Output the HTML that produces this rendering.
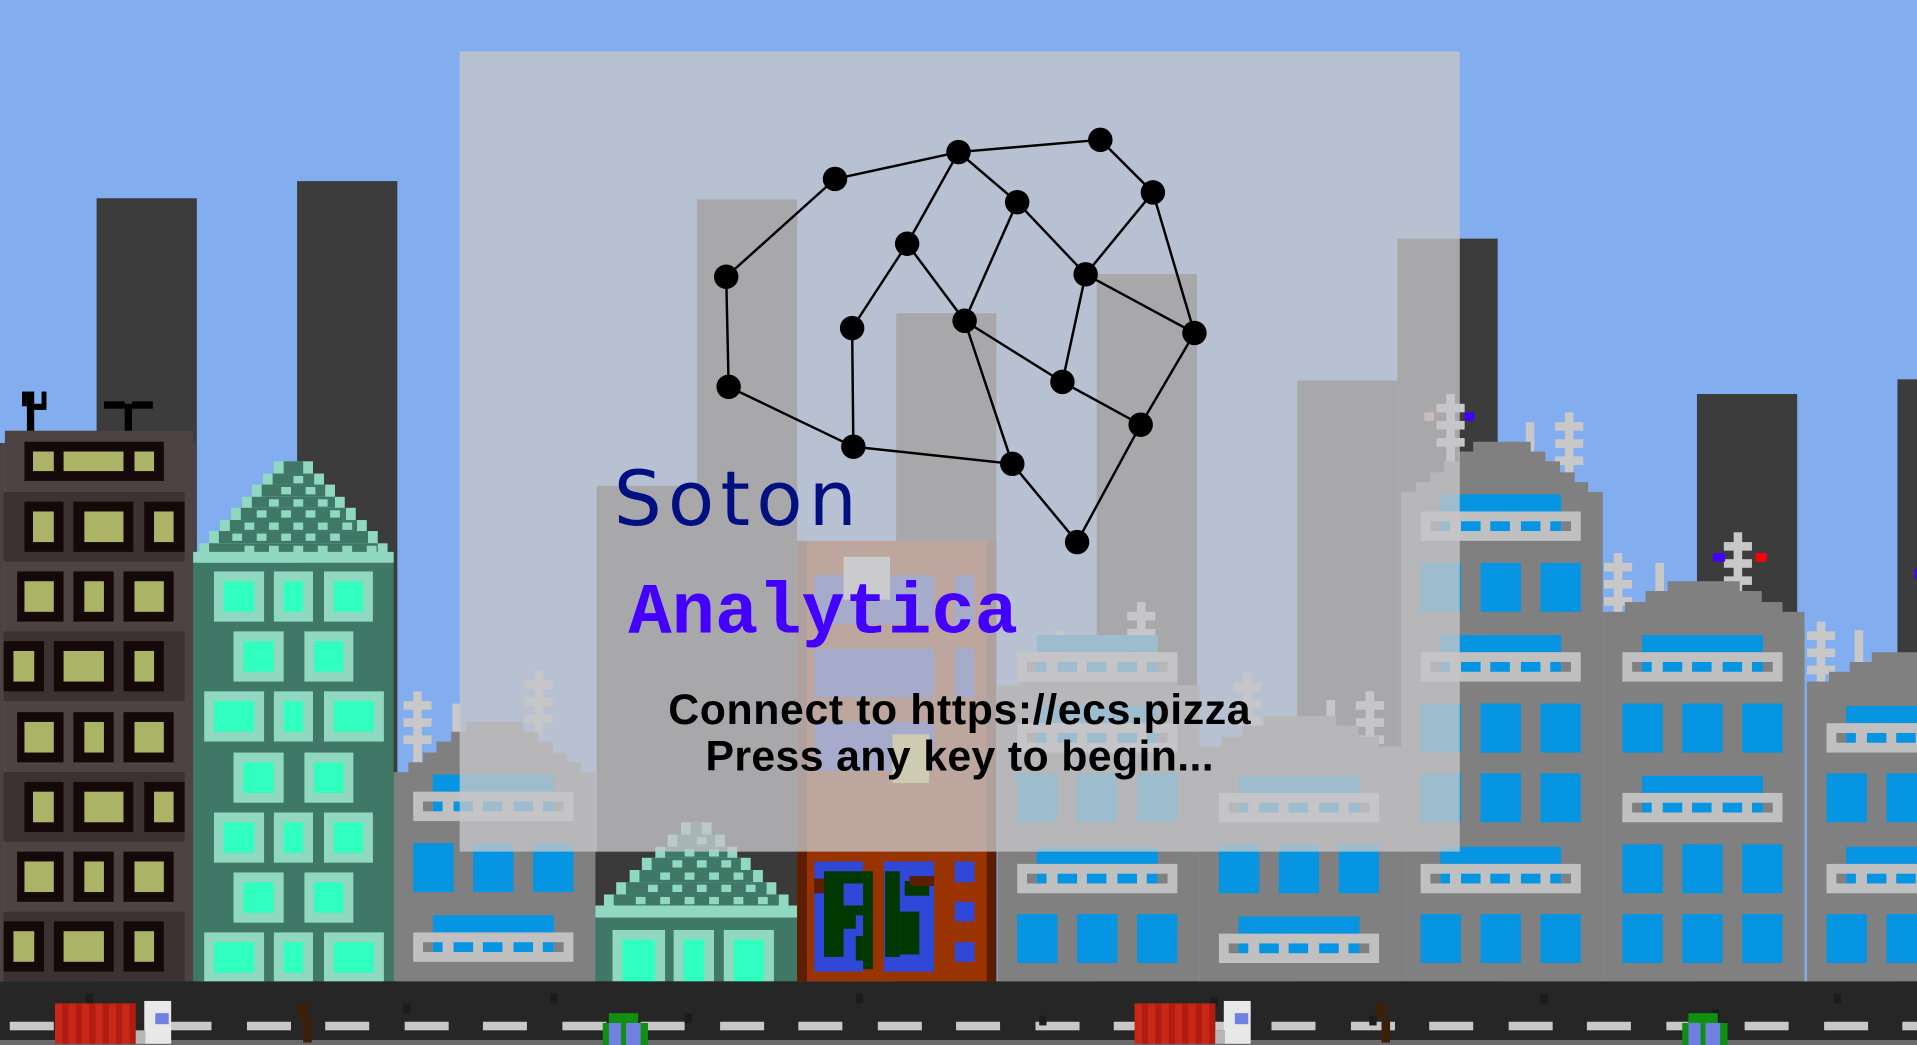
<!DOCTYPE html>
<html><head><meta charset="utf-8"><style>
html,body{margin:0;padding:0;width:1917px;height:1045px;overflow:hidden;background:#82aef0}
#s{position:absolute;left:0;top:0;width:1568px;height:854px;transform-origin:0 0;transform:scale(1.22258,1.22365);background:#82aef0;overflow:hidden}
#s div{position:absolute}
</style></head><body>
<div id="s"></div>
<script>
const S=document.getElementById('s');
function r(x,y,w,h,c){const d=document.createElement('div');d.style.cssText='left:'+x+'px;top:'+y+'px;width:'+w+'px;height:'+h+'px;background:'+c;S.appendChild(d);return d;}
[[79,162],[243,148],[570,163],[733,256],[897,224],[1143,195],[1388,322],[1552,310],[488,397],[1061,311]].forEach(([x,y])=>r(x,y,82,802-y,'#3c3c3c'));
function ant(x,top,h){const c='#c8c8c8';r(x,top,7,h,c);for(let i=0;i<3;i++)r(x-8,top+8+i*14,23,7,c);}
function pole(x,top,h){r(x,top,7,h,'#c8c8c8');}
function roof(x0,w,base,peak,c){const n=Math.max(1,Math.round((base-peak)/9));for(let i=0;i<n;i++){const inset=(w/2-12)*(i+1)/(n+1);r(x0+inset,base-(i+1)*((base-peak)/n),w-2*inset,(base-peak)/n+1,c);}}
function gb(x0,top,peak,floors){
 roof(x0,165,top,peak,'#808080');
 r(x0,top,165,802-top,'#808080');
 floors.forEach(([y,t])=>{
  if(t=='w'){for(let i=0;i<3;i++)r(x0+16+49*i,y-16,33,40,'#0595e2');}
  else{r(x0+32,y-14,99,14,'#0595e2');r(x0+16,y,131,24,'#c0c0c0');r(x0+24,y+8,8,8,'#808080');r(x0+32,y+8,8,8,'#0595e2');[49,73,98].forEach(o=>r(x0+o,y+8,16,8,'#0595e2'));r(x0+122,y+8,9,8,'#0595e2');r(x0+131,y+8,8,8,'#808080');}
 });
}
ant(1183,322,62);pole(1248,345,36);ant(1280,337,55);ant(1320,452,55);pole(1354,460,32);ant(1418,435,62);ant(1486,508,58);pole(1517,515,32);ant(338,565,58);pole(370,575,30);ant(437,548,52);ant(930,492,60);pole(863,515,30);ant(773,443,60);pole(805,450,30);ant(1017,550,55);ant(1117,565,55);pole(1085,572,30);
r(1401,452,10,7,'#4400ff');r(1436,452,9,7,'#ff0000');r(1198,337,8,7,'#4400ff');r(1165,337,8,7,'#d89090');r(1566,465,2,8,'#4400ff');
gb(322,631,590,[[647,'b'],[704.5,'w'],[762,'b']]);
gb(816,560,530,[[533,'b'],[590.5,'b'],[648,'w'],[705.5,'b'],[763,'w']]);
gb(981,610,585,[[648,'b'],[705.5,'w'],[763,'b']]);
gb(1146,402,361,[[418,'b'],[475.5,'w'],[533,'b'],[590.5,'w'],[648,'w'],[705.5,'b'],[763,'w']]);
gb(1311,500,475,[[533,'b'],[590.5,'w'],[648,'b'],[705.5,'w'],[763,'w']]);
gb(1478,557,533,[[590.5,'b'],[648,'w'],[705.5,'b'],[763,'w']]);
r(4,352,154,450,'#4f4242');r(0,362,4,440,'#4f4242');r(150,362,10,440,'#4f4242');
r(22,320,6,32,'#000');r(18,320,4,12,'#000');r(34,320,4,12,'#000');r(22,330,16,5,'#000');
r(102,330,6,22,'#000');r(85,328,17,6,'#000');r(108,328,17,6,'#000');
r(20,361,114,32,'#140808');r(27,369,17,16,'#abb466');r(52,369,49,16,'#abb466');r(110,369,16,16,'#abb466');
const rowA=[[20,52,27,44],[60,109,69,101],[118,151,126,142]],rowB=[[14,52,20,44],[60,93,69,85],[101,142,110,134]],rowC=[[3,36,11,28],[44,93,52,85],[101,134,110,126]];
const rows=[rowA,rowB,rowC,rowB,rowA,rowB,rowC];
rows.forEach((rw,i)=>{const y=410+i*57.2;if(i%2==0)r(3,y-8,148,57,'#3e3131');rw.forEach(([a,b,c,d])=>{r(a,y,b-a,41,'#140808');r(c,y+8,d-c,25,'#abb466');});});
(function(){const c1='#3f7866',c2='#90d8c0';
 for(let i=0;i<8;i++){const y=377+i*9.5;const inset=(82-8)*(8-i)/8.5;r(158+inset-4,y,164-2*inset+8,10,c2);r(158+inset+4,y,164-2*inset-8,10,c1);}
 for(let i=1;i<8;i++){const y=377+i*9.5;for(let x=170;x<315;x+=20){if(Math.abs(x+5-240)<(i*9.5)*0.95)r(x+(i%2)*10,y+2,8,6,c2);}}
 r(158,451,164,9,c2);r(158,460,164,342,c1);
 const three=[[175,216],[224,256],[265,305]],threeW=[[167,216],[224,256],[265,314]],two=[[191,232],[249,289]];
 for(let i=0;i<7;i++){const y=467+i*49.2;const set=i%2?two:(i%4==2?threeW:three);set.forEach(([a,b])=>{r(a,y,b-a,41,c2);r(a+8,y+8,b-a-16,25,'#30ffc0');});}
})();
(function(){const c1='#3f7866',c2='#90d8c0';r(487,696,165,106,'#3a3a3a');
 for(let i=0;i<7;i++){const y=672+i*9.8;const inset=(82-6)*(7-i)/7.2;r(487+inset-4,y,165-2*inset+8,10,c2);r(487+inset+4,y,165-2*inset-8,10,c1);}
 for(let i=1;i<7;i++){const y=672+i*9.8;for(let x=500;x<640;x+=20){if(Math.abs(x+5-569)<i*9.8)r(x+(i%2)*10,y+2,8,6,c2);}}
 r(487,740,165,10,c2);r(487,750,165,52,c1);
 [[501,544],[551,584],[592,633]].forEach(([a,b])=>{r(a,760,b-a,42,c2);r(a+8,768,b-a-16,34,'#30ffc0');});
})();
r(652,442,163,360,'#993300');r(652,442,8,360,'#5c1d00');r(807,442,8,360,'#5c1d00');
r(666,470,98,40,'#3048d8');r(666,530,98,40,'#3048d8');r(666,590,98,40,'#3048d8');r(781,470,16,40,'#3048d8');r(781,530,16,40,'#3048d8');
r(690,455,38,35,'#ddd');r(730,600,30,40,'#e8e060');
r(666,704,40,90,'#3048d8');r(723,704,41,90,'#3048d8');r(781,704,16,17,'#3048d8');r(781,737,16,16,'#3048d8');r(781,770,16,16,'#3048d8');
r(674,712,16,70,'#003800');r(690,712,16,10,'#003800');r(666,718,8,12,'#5c1d00');r(706,712,8,80,'#003800');r(724,712,12,70,'#003800');r(740,720,20,12,'#003800');r(736,745,16,35,'#003800');r(690,745,10,14,'#003800');r(700,765,6,20,'#003800');r(744,716,20,8,'#5c1d00');r(686,740,20,8,'#003800');
r(0,802,1568,48,'#262626');r(0,850,1568,4,'#6a6a6a');
for(let x=8;x<1568;x+=64.5)r(x,835,36,7,'#c8c8c8');
[[70,812],[130,830],[330,820],[450,812],[560,828],[700,812],[850,830],[990,815],[1120,830],[1260,812],[1400,825],[1500,812]].forEach(([x,y])=>r(x,y,6,8,'#1c1c1c'));
function truck(x){r(x,820,66,33,'#c82818');for(let i=0;i<6;i++)r(x+6+i*11,820,5,33,'#b01c10');r(x+73,818,22,35,'#e8e8e8');r(x+82,828,11,9,'#7080e0');r(x+66,842,8,11,'#b8b8b8');}
truck(45);truck(928);
function car(x){r(x+5,828,24,8,'#109010');r(x,836,37,18,'#109010');r(x+5,836,10,18,'#7080e0');r(x+19,836,12,18,'#7080e0');}
car(493);car(1376);
function bro(x){r(x,820,9,12,'#3a2008');r(x+5,832,7,20,'#3a2008');}
bro(243);bro(1125);
r(376,42,818,654,'rgba(198,198,200,0.79)');
</script>
<svg style="position:absolute;left:0;top:0;width:1917px;height:1045px" viewBox="0 0 1568 854">
<g stroke="#000" stroke-width="2" fill="none">
<polyline points="594,226 683,146 784,124 900,114 943,157 977,272 933,347 881,443 828,379 698,365 596,316 594,226"/>
<line x1="784" y1="124" x2="742" y2="199"/><line x1="742" y1="199" x2="697" y2="268"/><line x1="697" y1="268" x2="698" y2="365"/>
<line x1="742" y1="199" x2="789" y2="262"/><line x1="789" y1="262" x2="832" y2="165"/><line x1="784" y1="124" x2="832" y2="165"/>
<line x1="832" y1="165" x2="888" y2="224"/><line x1="888" y1="224" x2="943" y2="157"/><line x1="888" y1="224" x2="977" y2="272"/>
<line x1="888" y1="224" x2="869" y2="312"/><line x1="869" y1="312" x2="789" y2="262"/><line x1="789" y1="262" x2="828" y2="379"/><line x1="869" y1="312" x2="933" y2="347"/>
</g>
<g fill="#000">
<circle cx="683" cy="146" r="10"/><circle cx="784" cy="124" r="10"/><circle cx="900" cy="114" r="10"/><circle cx="943" cy="157" r="10"/><circle cx="832" cy="165" r="10"/><circle cx="742" cy="199" r="10"/><circle cx="594" cy="226" r="10"/><circle cx="888" cy="224" r="10"/><circle cx="697" cy="268" r="10"/><circle cx="789" cy="262" r="10"/><circle cx="977" cy="272" r="10"/><circle cx="869" cy="312" r="10"/><circle cx="596" cy="316" r="10"/><circle cx="933" cy="347" r="10"/><circle cx="698" cy="365" r="10"/><circle cx="828" cy="379" r="10"/><circle cx="881" cy="443" r="10"/>
</g>
<text x="502" y="429" font-family="DejaVu Sans, sans-serif" font-size="62" fill="#001080" letter-spacing="5">Soton</text>
<text x="514" y="517" font-family="Liberation Mono, monospace" font-weight="bold" font-size="59" fill="#4400ff">Analytica</text>
<text x="785" y="592" text-anchor="middle" font-family="Liberation Sans, sans-serif" font-weight="bold" font-size="35" letter-spacing="0.5" fill="#000">Connect to https://ecs.pizza</text>
<text x="785" y="630" text-anchor="middle" font-family="Liberation Sans, sans-serif" font-weight="bold" font-size="35" letter-spacing="0.3" fill="#000">Press any key to begin...</text>
</svg>
</body></html>
